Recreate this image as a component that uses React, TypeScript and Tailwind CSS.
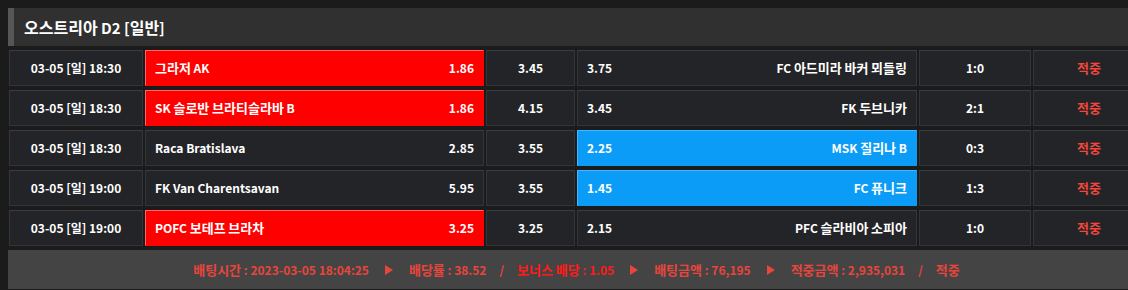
import React from "react";

interface Bet {
  time: string;
  home: string;
  homeOdds: string;
  draw: string;
  awayOdds: string;
  away: string;
  score: string;
  pick: "home" | "away";
}

const bets: Bet[] = [
  { time: "03-05 [일] 18:30", home: "그라저 AK", homeOdds: "1.86", draw: "3.45", awayOdds: "3.75", away: "FC 아드미라 바커 뫼들링", score: "1:0", pick: "home" },
  { time: "03-05 [일] 18:30", home: "SK 슬로반 브라티슬라바 B", homeOdds: "1.86", draw: "4.15", awayOdds: "3.45", away: "FK 두브니카", score: "2:1", pick: "home" },
  { time: "03-05 [일] 18:30", home: "Raca Bratislava", homeOdds: "2.85", draw: "3.55", awayOdds: "2.25", away: "MSK 질리나 B", score: "0:3", pick: "away" },
  { time: "03-05 [일] 19:00", home: "FK Van Charentsavan", homeOdds: "5.95", draw: "3.55", awayOdds: "1.45", away: "FC 퓨니크", score: "1:3", pick: "away" },
  { time: "03-05 [일] 19:00", home: "POFC 보테프 브라차", homeOdds: "3.25", draw: "3.25", awayOdds: "2.15", away: "PFC 슬라비아 소피아", score: "1:0", pick: "home" },
];

const plain = "border border-[#343538] border-t-[#3c3d40] bg-[#232427]";
const red = "border border-[#ff0000] border-t-[#ff6464] border-l-[#ff6464] bg-[#ff0000]";
const blue = "border border-[#0a9cf7] border-t-[#46b6ff] border-l-[#46b6ff] bg-[#0a9cf7]";

// hangul renders a bit smaller than latin in this font, bump it up
const Ko = ({ text, size = "text-[13px]" }: { text: string; size?: string }) => (
  <>
    {text.split(/([가-힣]+)/).map((part, i) =>
      /[가-힣]/.test(part) ? (
        <span key={i} className={size}>
          {part}
        </span>
      ) : (
        part
      )
    )}
  </>
);

const Arrow = () => (
  <span className="mx-4 inline-block h-0 w-0 border-y-[5px] border-l-[8px] border-y-transparent border-l-[#e8453c]" />
);

const Slash = () => <span className="mx-[13px]">/</span>;

export default function App() {
  return (
    <div className="min-h-screen overflow-hidden bg-[#1b1b1b] pt-2 font-['Noto_Sans_CJK_KR',sans-serif] text-[12px] font-bold text-white">
      <div className="ml-2 w-[1137px]">
        <div className="flex h-[38px] items-center border-l-[6px] border-[#565656] bg-[#303030] pl-[10px] text-[15px]">
          <span>
            <Ko text="오스트리아 D2 [일반]" size="text-[16px]" />
          </span>
        </div>
        <div className="mt-1 flex flex-col gap-1 pl-px">
          {bets.map((b, i) => (
            <div key={i} className="flex h-9 gap-[2px]">
              <div className={`${plain} flex w-[134px] items-center justify-center`}>{b.time}</div>
              <div className={`${b.pick === "home" ? red : plain} flex w-[339px] items-center justify-between px-[9px]`}>
                <span>
                  <Ko text={b.home} />
                </span>
                <span>{b.homeOdds}</span>
              </div>
              <div className={`${plain} flex w-[89px] items-center justify-center`}>{b.draw}</div>
              <div className={`${b.pick === "away" ? blue : plain} flex w-[340px] items-center justify-between px-[9px]`}>
                <span>{b.awayOdds}</span>
                <span>
                  <Ko text={b.away} />
                </span>
              </div>
              <div className={`${plain} flex w-[112px] items-center justify-center`}>{b.score}</div>
              <div className={`${plain} flex w-[112px] items-center justify-center text-[13px] text-[#f0463c]`}>적중</div>
            </div>
          ))}
        </div>
        <div className="mt-1 flex h-[39px] items-center justify-center bg-[#444444] text-[#e8453c]">
          <span>
            <Ko text="배팅시간 : 2023-03-05 18:04:25" />
          </span>
          <Arrow />
          <span>
            <Ko text="배당률 : 38.52" />
          </span>
          <Slash />
          <span className="text-[#ff1a1a]">
            <Ko text="보너스 배당 : 1.05" />
          </span>
          <Arrow />
          <span>
            <Ko text="배팅금액 : 76,195" />
          </span>
          <Arrow />
          <span>
            <Ko text="적중금액 : 2,935,031" />
          </span>
          <Slash />
          <span className="text-[13px]">적중</span>
        </div>
      </div>
    </div>
  );
}
